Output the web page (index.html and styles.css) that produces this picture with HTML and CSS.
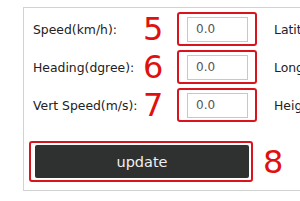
FILE: index.html
```html
<!DOCTYPE html>
<html lang="en">
<head>
<meta charset="UTF-8">
<meta name="viewport" content="width=device-width, initial-scale=1.0">
<title>Vehicle State</title>
<link rel="stylesheet" href="styles.css">
</head>
<body>

<div class="panel">
    <div class="row">
        <div class="label">Speed(km/h):</div>
        <div class="mark">5</div>
        <div class="hl-box"><input class="field" value="0.0"></div>
        <div class="side-label">Latitude:</div>
    </div>
    <div class="row">
        <div class="label">Heading(dgree):</div>
        <div class="mark">6</div>
        <div class="hl-box"><input class="field" value="0.0"></div>
        <div class="side-label">Longitude:</div>
    </div>
    <div class="row">
        <div class="label">Vert Speed(m/s):</div>
        <div class="mark">7</div>
        <div class="hl-box"><input class="field" value="0.0"></div>
        <div class="side-label">Height:</div>
    </div>

    <div class="button-row">
        <div class="hl-btn"><button class="update-btn">update</button></div>
        <div class="mark mark-8">8</div>
    </div>
</div>

</body>
</html>
```

FILE: styles.css
```css
body {
    margin: 0;
    font-family: "DejaVu Sans", sans-serif;
    background-color: #fff;
    overflow: hidden;
}
.panel {
    margin: 7px 0 0 23px;
    width: 320px;
    height: 184px;
    border: 1px solid #d2d2d2;
    padding: 4px 0 0 9px;
    box-sizing: border-box;
}
.row {
    display: flex;
    align-items: center;
    height: 34px;
    margin-bottom: 4px;
}
.label {
    width: 110px;
    font-size: 12.4px;
    color: #222;
}
.mark {
    width: 34px;
    font-size: 32px;
    color: #e01010;
    line-height: 34px;
}
.hl-box {
    width: 80px;
    height: 34px;
    border: 2px solid #d9141c;
    border-radius: 3px;
    box-sizing: border-box;
    padding: 0 7px 0 8px;
    display: flex;
    align-items: center;
}
.field {
    width: 61px;
    height: 25px;
    box-sizing: border-box;
    border: 1px solid #c8c8c8;
    padding: 0 0 0 8px;
    font-family: "DejaVu Sans", sans-serif;
    font-size: 12px;
    color: #555;
    outline: none;
}
.side-label {
    margin-left: 17px;
    font-size: 12.4px;
    color: #222;
    white-space: nowrap;
}
.button-row {
    display: flex;
    align-items: center;
    margin: 19px 0 0 -4px;
}
.hl-btn {
    width: 224px;
    height: 41px;
    border: 2px solid #d9141c;
    border-radius: 3px;
    box-sizing: border-box;
    padding: 2px 2px 2px 4px;
}
.update-btn {
    width: 100%;
    height: 100%;
    border: none;
    border-radius: 2px;
    background-color: #2f3131;
    color: #f0f0f0;
    font-family: "DejaVu Sans", sans-serif;
    font-size: 14.5px;
    cursor: pointer;
}
.mark-8 {
    margin-left: 10px;
}
```
